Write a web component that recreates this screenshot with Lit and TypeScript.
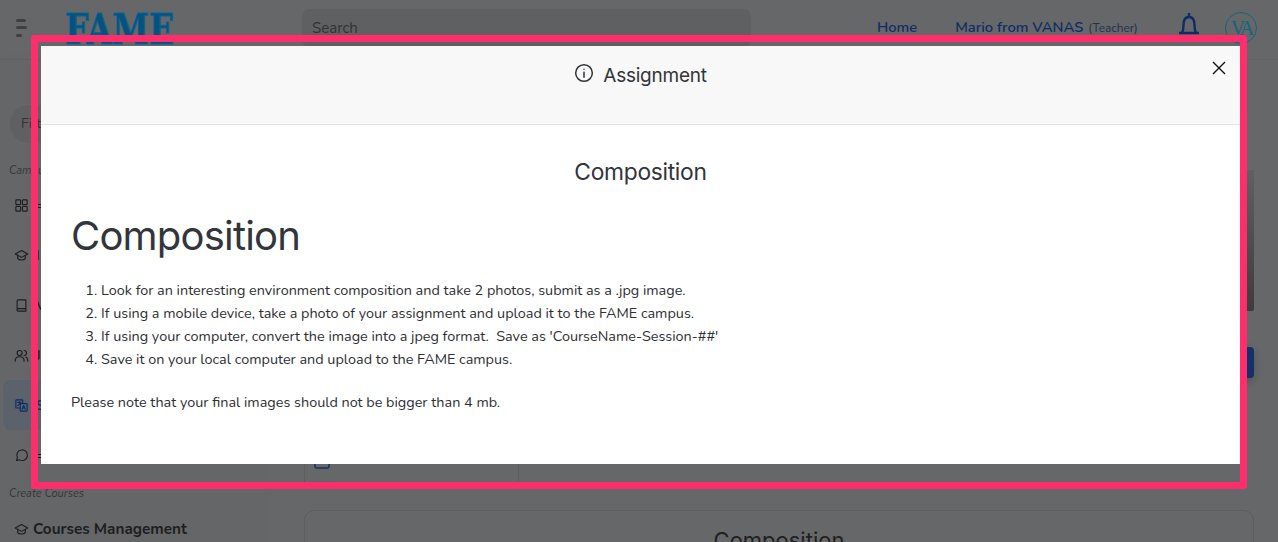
import { LitElement, html, css, svg } from "lit";
import { customElement } from "lit/decorators.js";

const ic = (body: unknown, size = 16) => html`<svg width=${size} height=${size} viewBox="0 0 24 24" fill="none" stroke="currentColor" stroke-width="1.8" stroke-linecap="round" stroke-linejoin="round">${body}</svg>`;

const icons = {
  grid: svg`<rect x="3" y="3" width="7.5" height="7.5" rx="1"/><rect x="13.5" y="3" width="7.5" height="7.5" rx="1"/><rect x="3" y="13.5" width="7.5" height="7.5" rx="1"/><rect x="13.5" y="13.5" width="7.5" height="7.5" rx="1"/>`,
  cap: svg`<path d="M12 4 2 9.5 12 15l10-5.5z"/><path d="M6 12v5c2 3 10 3 12 0v-5"/>`,
  book: svg`<path d="M5 20V5a2 2 0 0 1 2-2h12v18H7a2 2 0 0 1-2-2 2 2 0 0 1 2-2h12"/>`,
  people: svg`<circle cx="9" cy="8" r="4"/><path d="M2 21v-2a6 6 0 0 1 6-5h2a6 6 0 0 1 6 5v2"/><path d="M16 4a4 4 0 0 1 0 8"/><path d="M19 14.500a6 6 0 0 1 3 5V21"/>`,
  trans: svg`<rect x="3" y="3" width="11" height="13" rx="1"/><rect x="10" y="9" width="11" height="12" rx="1" fill="#5c626c"/><path d="M13 18l2.500-6 2.500 6M14 16h3M6 7h5M8.500 5.500V7M10 7c-.5 2.500-2 4-4 5"/>`,
  chat: svg`<path d="M4 20l1.500-4.500A8.500 8.500 0 1 1 9 19z"/>`,
};

@customElement("app-root")
export class AppRoot extends LitElement {
  static styles = css`
    :host { display: block; width: 1278px; height: 542px; position: relative; overflow: hidden; background: #666768; font-family: "Nunito", "Open Sans", "Noto Sans", sans-serif; }
    .page { height: 542px; display: flex; flex-direction: column; color: #1d1e20; }
    .top { height: 60px; flex: none; border-bottom: 1px solid #5f6061; display: flex; align-items: center; box-sizing: border-box; padding: 0 0 0 16px; }
    .burger { width: 12px; display: flex; flex-direction: column; gap: 4.500px; margin-right: 39px; margin-top: -4px; flex: none; }
    .burger i { display: block; height: 3px; border-radius: 2px; background: #3f4041; width: 10px; }
    .burger i:nth-child(2) { width: 11px; } .burger i:last-child { width: 6px; }
    .logo { width: 108px; height: 46px; align-self: flex-start; margin: 11px 129px 0 -2px; font: 700 42px/38px "DejaVu Serif", serif; color: #07517f; -webkit-text-stroke: 1px #0b6593; flex: none; white-space: nowrap; transform: scaleX(.79); transform-origin: left top; }
    .search { width: 449px; height: 38px; border-radius: 8px; background: #5f6061; font-size: 15px; color: #333; padding: 0 10px; box-sizing: border-box; display: flex; align-items: center; margin-top: -4px; flex: none; }
    .nav { margin-left: 126px; display: flex; align-items: center; margin-top: -6px; color: #0d2d66; font-size: 14.700px; font-weight: 600; white-space: nowrap; flex: none; width: 301px; }
    .nav .me { margin-left: 38px; } .nav small { font-size: 11.800px; font-weight: 400; color: #1e3150; margin-left: 5px; }
    .bell { color: #0d2d66; margin-top: -12px; flex: none; }
    .avatar { margin-left: 25px; margin-top: -4px; width: 32px; height: 32px; border-radius: 50%; border: 1px solid #16647e; box-sizing: border-box; color: #16647e; font: 20px/30px "Liberation Serif", serif; letter-spacing: -3px; text-align: center; flex: none; overflow: hidden; }
    .body { flex: 1; display: flex; min-height: 0; }
    .side { width: 264px; flex: none; padding: 45px 10px 0 3px; box-sizing: border-box; display: flex; flex-direction: column; background: #656667; box-shadow: 1px 0 14px rgba(0,0,0,.02); }
    .filter { width: 50px; height: 38px; margin-left: 7px; border-radius: 19px; background: #5f6061; font-size: 14px; line-height: 38px; padding-left: 11px; box-sizing: border-box; color: #333; margin-bottom: 20px; }
    .cap { font-size: 11px; font-style: italic; color: #35363a; line-height: 16px; margin-left: 6px; white-space: nowrap; }
    .rows { margin-top: 1px; display: flex; flex-direction: column; }
    .row { height: 50px; display: flex; align-items: center; padding-left: 11px; gap: 7px; font-size: 14px; font-weight: 600; color: #1d1e20; border-radius: 8px; }
    .row.on { background: #5c626c; color: #0d2d66; }
    .cm { margin-top: 15px; height: 24px; display: flex; align-items: center; gap: 4px; font-size: 15.300px; font-weight: 700; padding-left: 11px; }
    .cap2 { margin-top: 6px; }
    .main { flex: 1; padding: 110px 24px 0 40px; display: flex; flex-direction: column; min-width: 0; }
    .photo { height: 141px; flex: none; background: linear-gradient(#5f6061, #3c3c3d); border-radius: 0 0 2px 2px; }
    .btn { height: 31px; width: 120px; margin: 36px 0 0 auto; flex: none; background: #13306b; border-radius: 4px; box-shadow: 0 3px 8px rgba(0,0,0,.2); }
    .mini { height: 60px; width: 215px; flex: none; margin-top: 47px; border: 1px solid #5c5d5e; border-top: 0; box-sizing: border-box; padding: 29px 0 0 9px; color: #13306b; }
    .card { margin-top: 25px; flex: none; height: 80px; border: 1px solid #5c5d5e; border-radius: 10px; text-align: center; font: 22px/28px Inter, sans-serif; color: #1f2021; padding-top: 15px; box-sizing: border-box; }
    .flag { position: absolute; left: 31px; top: 35px; width: 1216px; height: 454px; box-sizing: border-box; border: 7px solid #fe2d6b; border-radius: 3px; z-index: 2; }
    .modal { position: absolute; left: 41px; top: 46px; width: 1199px; height: 418px; background: #fff; z-index: 1; color: #323539; }
    .mh { height: 79px; box-sizing: border-box; background: #f8f8f8; border-bottom: 1px solid #e2e2e2; display: flex; justify-content: center; padding-top: 17px; gap: 9px; font: 400 19px/26px Inter, sans-serif; letter-spacing: -.25px; position: relative; }
    .mh svg { margin-top: 0; }
    .x { position: absolute; right: 14px; top: 15px; color: #111; margin: 0 !important; }
    .mb { padding: 33px 30px 0; }
    .t2 { text-align: center; font: 400 22.800px/28px Inter, sans-serif; letter-spacing: -.3px; margin: 0; }
    h1 { font: 400 40px/48px Inter, sans-serif; letter-spacing: -.8px; margin: 26px 0 19px; }
    ol { margin: 0 0 20px; padding-left: 30px; font-size: 14.400px; line-height: 23px; color: #2d2f33; }
    p { margin: 0; font-size: 14.400px; line-height: 23px; color: #2d2f33; }
  `;
  render() {
    const rows: [unknown, string, boolean][] = [
      [icons.grid, "=", false], [icons.cap, "I", false], [icons.book, "V", false],
      [icons.people, "J", false], [icons.trans, "S", true], [icons.chat, "=", false],
    ];
    return html`
      <div class="page">
        <header class="top">
          <div class="burger"><i></i><i></i><i></i></div>
          <div class="logo">FAME</div>
          <div class="search">Search</div>
          <nav class="nav"><span>Home</span><span class="me">Mario from VANAS<small>(Teacher)</small></span></nav>
          <svg class="bell" width="22" height="26" viewBox="0 0 22 26" fill="none" stroke="currentColor" stroke-width="2.400"><path d="M1 22h20M4 22c1-2 1.500-3 1.500-8 0-5 2-8 5.500-8s5.500 3 5.500 8c0 5 .5 6 1.500 8"/><path d="M11 2v3"/></svg>
          <div class="avatar">VA</div>
        </header>
        <div class="body">
          <aside class="side">
            <div class="filter">Filter</div>
            <div class="cap">Campus</div>
            <div class="rows">${rows.map(([i, t, on]) => html`<div class="row ${on ? "on" : ""}">${ic(i, 15)}<span>${t}</span></div>`)}</div>
            <div class="cap cap2">Create Courses</div>
            <div class="cm">${ic(icons.cap, 15)}<span>Courses Management</span></div>
          </aside>
          <main class="main">
            <div class="photo"></div>
            <div class="btn"></div>
            <div class="mini">
              <svg width="20" height="16" viewBox="0 0 20 16" fill="none" stroke="currentColor" stroke-width="1.500"><rect x="1" y="1" width="14" height="13" rx="2"/><path d="M18 6v4"/></svg>
            </div>
            <div class="card">Composition</div>
          </main>
        </div>
      </div>
      <div class="modal">
        <div class="mh">
          ${ic(svg`<circle cx="12" cy="12" r="10"/><path d="M12 11v6M12 7.500v.1"/>`, 20)}
          <span>Assignment</span>
          <svg class="x" width="14" height="14" viewBox="0 0 14 14" fill="none" stroke="currentColor" stroke-width="1.400"><path d="M1 1l12 12M13 1 1 13"/></svg>
        </div>
        <div class="mb">
          <h2 class="t2">Composition</h2>
          <h1>Composition</h1>
          <ol>
            <li>Look for an interesting environment composition and take 2 photos, submit as a .jpg image.</li>
            <li>If using a mobile device, take a photo of your assignment and upload it to the FAME campus.</li>
            <li>If using your computer, convert the image into a jpeg format.&nbsp; Save as 'CourseName-Session-##'</li>
            <li>Save it on your local computer and upload to the FAME campus.</li>
          </ol>
          <p>Please note that your final images should not be bigger than 4 mb.</p>
        </div>
      </div>
      <div class="flag"></div>
    `;
  }
}
